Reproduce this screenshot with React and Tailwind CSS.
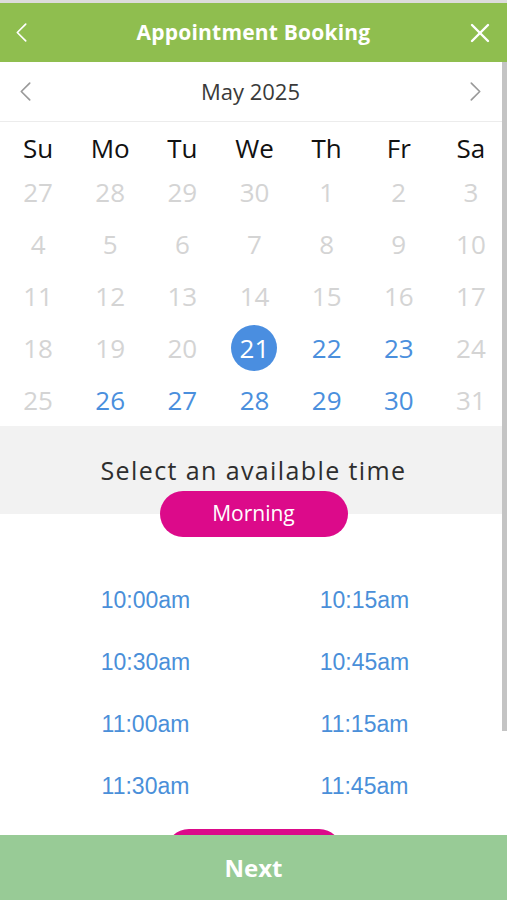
import React from "react";

const days = ["Su", "Mo", "Tu", "We", "Th", "Fr", "Sa"];

// weeks of the month view, [label, state]
const weeks = [
  [[27, "off"], [28, "off"], [29, "off"], [30, "off"], [1, "off"], [2, "off"], [3, "off"]],
  [[4, "off"], [5, "off"], [6, "off"], [7, "off"], [8, "off"], [9, "off"], [10, "off"]],
  [[11, "off"], [12, "off"], [13, "off"], [14, "off"], [15, "off"], [16, "off"], [17, "off"]],
  [[18, "off"], [19, "off"], [20, "off"], [21, "sel"], [22, "on"], [23, "on"], [24, "off"]],
  [[25, "off"], [26, "on"], [27, "on"], [28, "on"], [29, "on"], [30, "on"], [31, "off"]],
];

const times = [
  "10:00am",
  "10:15am",
  "10:30am",
  "10:45am",
  "11:00am",
  "11:15am",
  "11:30am",
  "11:45am",
];

const Chevron = ({ dir = "left", className }) => (
  <svg viewBox="0 0 12 20" className={className} fill="none" stroke="currentColor" strokeWidth="1.6" strokeLinecap="round" strokeLinejoin="round">
    {dir === "left" ? <polyline points="10,2 2,10 10,18" /> : <polyline points="2,2 10,10 2,18" />}
  </svg>
);

const App = () => {
  return (
    <div
      className="w-[507px] h-[900px] flex flex-col overflow-hidden bg-white"
      style={{ fontFamily: '"Open Sans", "Noto Sans", sans-serif' }}
    >
      {/* top strip */}
      <div className="h-[3px] bg-[#dcdcdc] shrink-0" />

      {/* Header */}
      <div className="h-[59px] shrink-0 bg-[#8fbe4f] flex items-center px-[15px] text-white">
        <div className="w-[28px]">
          <Chevron dir="left" className="w-[13px] h-[21px]" />
        </div>
        <h1 className="flex-1 text-center text-[21px] font-bold tracking-[0.2px]">Appointment Booking</h1>
        <div className="w-[28px] flex justify-end">
          <svg viewBox="0 0 20 20" className="w-[20px] h-[20px] mr-[2px]" stroke="currentColor" strokeWidth="2.4" strokeLinecap="round">
            <line x1="2" y1="2" x2="18" y2="18" />
            <line x1="18" y1="2" x2="2" y2="18" />
          </svg>
        </div>
      </div>

      {/* Body */}
      <div className="flex-1 relative overflow-hidden">
        {/* Month */}
        <div className="h-[60px] flex items-center justify-between pl-[19px] pr-[25px] border-b border-[#ececec] text-[#9a9a9a]">
          <Chevron dir="left" className="w-[13px] h-[21px]" />
          <span className="text-[22px] text-[#3a3a3a]">May 2025</span>
          <Chevron dir="right" className="w-[13px] h-[21px]" />
        </div>

        {/* Weekdays */}
        <div className="grid grid-cols-7 pl-[2px] pt-[8px] h-[44px]">
          {days.map((d) => (
            <div key={d} className="text-center text-[26px] leading-[36px] text-[#111]">
              {d}
            </div>
          ))}
        </div>

        {/* Dates */}
        {weeks.map((week, i) => (
          <div key={i} className="grid grid-cols-7 pl-[2px] h-[52px]">
            {week.map(([n, state]) => (
              <div key={n + state} className="flex items-center justify-center">
                {state === "sel" ? (
                  <span className="w-[46px] h-[46px] rounded-full bg-[#4a8ee0] text-white text-[26px] flex items-center justify-center">
                    {n}
                  </span>
                ) : (
                  <span className={`text-[26px] ${state === "on" ? "text-[#4a8fdd]" : "text-[#d4d4d4]"}`}>
                    {n}
                  </span>
                )}
              </div>
            ))}
          </div>
        ))}

        {/* Time header */}
        <div className="h-[88px] bg-[#f2f2f2] pt-[28px]">
          <p className="text-center text-[25px] leading-[32px] tracking-[1.4px] text-[#2e2e2e]">
            Select an available time
          </p>
        </div>
        <div className="relative -mt-[23px] mx-auto w-[188px] h-[46px] rounded-full bg-[#dc0a8a] text-white text-[21px] flex items-center justify-center">
          Morning
        </div>

        {/* Time slots */}
        <div
          className="grid grid-cols-2 w-[438px] ml-[36px] pt-[32px]"
          style={{ fontFamily: '"Liberation Sans", Arial, sans-serif' }}
        >
          {times.map((t) => (
            <div key={t} className="h-[62px] flex items-center justify-center text-[23px] text-[#4a8fd9]">
              {t}
            </div>
          ))}
        </div>

        {/* next period pill, cut off by the footer */}
        <div className="mt-[12px] mx-auto w-[176px] h-[46px] rounded-full bg-[#dc0a8a]" />

        {/* scrollbar */}
        <div className="absolute top-0 right-0 w-[5px] h-[669px] bg-[#c4c4c4]" />
      </div>

      {/* Footer */}
      <div className="h-[65px] shrink-0 bg-[#98cb96] flex items-center justify-center text-white text-[24px] font-bold">
        Next
      </div>
    </div>
  );
};

export default App;
